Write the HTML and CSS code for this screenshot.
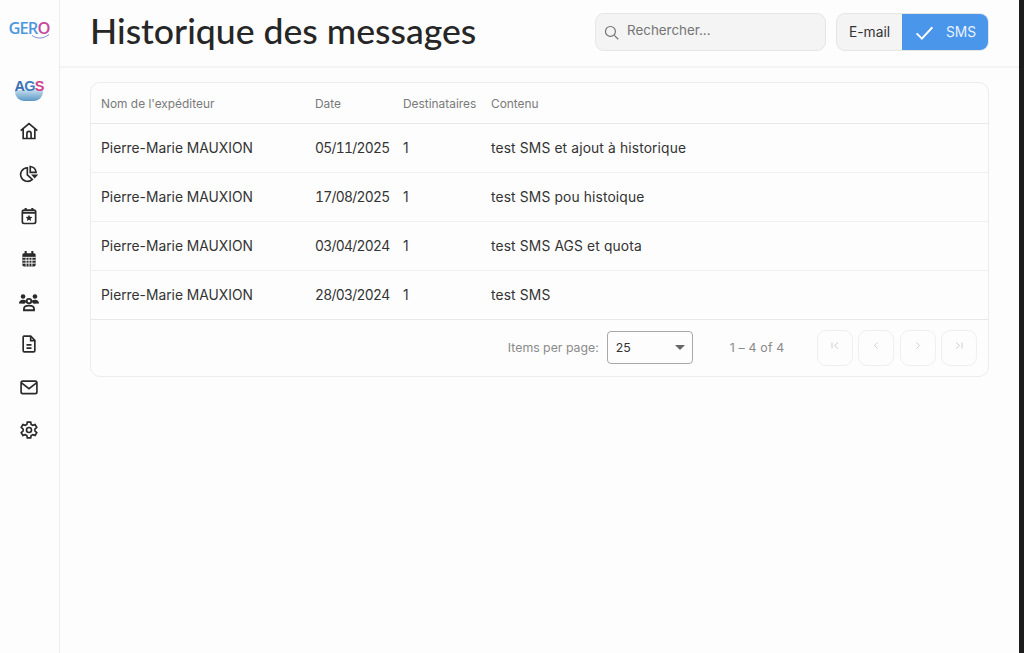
FILE: index.html
```html
<!DOCTYPE html>
<html lang="fr">
<head>
<meta charset="utf-8">
<title>Historique des messages</title>
<link rel="stylesheet" href="styles.css">
</head>
<body>
<div class="app">
  <aside class="sidebar">
    <div class="logo-gero">GER<span class="logo-o">O</span><svg viewBox="0 0 42 6" class="gero-swoosh"><path d="M24 1.500c4 3 11 4 17-1"/></svg></div>
    <div class="logo-ags"><span class="ags-text">A<span class="ags-g">G</span><span class="ags-s">S</span></span><span class="ags-wave"></span></div>
    <nav class="nav">
      <a class="nav-item"><svg viewBox="0 0 24 24" class="ico"><path d="M2 11.500 12 3l10 8.500M5 9.500V21h14V9.500M9.500 21v-6a2.500 2.500 0 0 1 5 0v6"/></svg></a>
      <a class="nav-item"><svg viewBox="0 0 24 24" class="ico"><path d="M10 4.500a8.200 8.200 0 1 0 6 14l-6-5.500z"/><path d="M13.500 3a8 8 0 0 1 7 7h-7z"/><path class="fill" d="M14.500 12.500H23l-4.200 5z"/></svg></a>
      <a class="nav-item"><svg viewBox="0 0 24 24" class="ico"><rect x="4" y="5" width="16" height="16" rx="2"/><path class="thick" d="M4 8h16M8 2.500V6M16 2.500V6"/><path class="fill" d="m12 10.500 1.200 2.500 2.800.3-2 1.900.5 2.800-2.500-1.400-2.500 1.400.5-2.800-2-1.900 2.800-.3z"/></svg></a>
      <a class="nav-item"><svg viewBox="0 0 24 24" class="ico"><rect class="fill" x="4" y="5" width="16" height="16" rx="2"/><path class="fill-line" d="M8 2.500V6M16 2.500V6"/><path class="grid-line" d="M4 10h16M4 13.500h16M4 17h16M8.500 10v11M12 10v11M15.500 10v11"/></svg></a>
      <a class="nav-item"><svg viewBox="0 0 24 24" class="ico ico-wide"><circle class="fill" cx="5.500" cy="6" r="2.500"/><circle class="fill" cx="18.500" cy="6" r="2.500"/><path class="fill" d="M1 13.500c0-2.500 2-4 4.500-4s3.500 1 4 2l-2.500 2.500zM23 13.500c0-2.500-2-4-4.500-4s-3.500 1-4 2l2.500 2.500z"/><circle cx="12" cy="11" r="2.500"/><path d="M6.500 21v-1.500c0-2.500 2.500-3.500 5.500-3.500s5.500 1 5.500 3.500V21z"/></svg></a>
      <a class="nav-item"><svg viewBox="0 0 24 24" class="ico"><path d="M6 2.500h8l5 5V20a1.500 1.500 0 0 1-1.500 1.500h-11A1.500 1.500 0 0 1 5 20V4a1.500 1.500 0 0 1 1-1.500z"/><path d="M9 13h6M9 17h6M14 3v5h5"/></svg></a>
      <a class="nav-item"><svg viewBox="0 0 24 24" class="ico"><rect x="2.500" y="5" width="19" height="15" rx="2"/><path d="m3 7 9 7 9-7"/></svg></a>
      <a class="nav-item"><svg viewBox="0 0 24 24" class="ico"><circle cx="12" cy="12" r="3"/><path d="M10 2.500h4l.6 2.900 1.900 1 2.800-.9 2 3.400-2.200 2v2.200l2.200 2-2 3.400-2.800-.9-1.900 1-.6 2.900h-4l-.6-2.900-1.900-1-2.800.9-2-3.400 2.200-2v-2.200l-2.200-2 2-3.400 2.800.9 1.900-1z"/></svg></a>
    </nav>
  </aside>
  <main class="main">
    <header class="header">
      <h1 class="title">Historique des messages</h1>
      <div class="tools">
        <label class="search">
          <svg viewBox="0 0 24 24" class="search-ico"><circle cx="10.500" cy="10.500" r="7"/><path d="m16 16 5.500 5.500"/></svg>
          <span class="search-text">Rechercher...</span>
        </label>
        <div class="toggle">
          <span class="toggle-opt">E-mail</span>
          <span class="toggle-opt toggle-on"><svg viewBox="0 0 24 24" class="check"><path d="m3 13 6 6L21 6"/></svg>SMS</span>
        </div>
      </div>
    </header>
    <section class="content">
      <div class="card">
        <table class="table">
          <colgroup><col class="c1"><col class="c2"><col class="c3"><col></colgroup>
          <thead>
            <tr><th>Nom de l'expéditeur</th><th>Date</th><th>Destinataires</th><th>Contenu</th></tr>
          </thead>
          <tbody>
            <tr><td>Pierre-Marie MAUXION</td><td class="num">05/11/2025</td><td>1</td><td class="msg">test SMS et ajout à historique</td></tr>
            <tr><td>Pierre-Marie MAUXION</td><td class="num">17/08/2025</td><td>1</td><td class="msg">test SMS pou histoique</td></tr>
            <tr><td>Pierre-Marie MAUXION</td><td class="num">03/04/2024</td><td>1</td><td class="msg">test SMS AGS et quota</td></tr>
            <tr><td>Pierre-Marie MAUXION</td><td class="num">28/03/2024</td><td>1</td><td class="msg">test SMS</td></tr>
          </tbody>
        </table>
        <div class="pager">
          <span class="pager-label">Items per page:</span>
          <div class="select"><span>25</span><span class="caret"></span></div>
          <span class="pager-range">1 – 4 of 4</span>
          <div class="pager-btns">
            <button class="pbtn"><svg viewBox="0 0 12 12"><path d="M3 2.500v6M9 2.500l-3.500 3 3.500 3"/></svg></button>
            <button class="pbtn"><svg viewBox="0 0 12 12"><path d="M7.500 2.500l-3 3 3 3"/></svg></button>
            <button class="pbtn"><svg viewBox="0 0 12 12"><path d="M4.500 2.500l3 3-3 3"/></svg></button>
            <button class="pbtn"><svg viewBox="0 0 12 12"><path d="M3 2.500l3.500 3-3.500 3M9 2.500v6"/></svg></button>
          </div>
        </div>
      </div>
    </section>
  </main>
  <div class="edge"></div>
</div>
</body>
</html>
```
FILE: styles.css
```css
* { box-sizing: border-box; }
html, body { margin: 0; height: 100%; }
body { font-family: Inter, "Liberation Sans", sans-serif; background: #fdfdfd; color: #2b2b2b; overflow: hidden; }
.app { display: flex; height: 653px; width: 1024px; }

.sidebar { width: 60px; flex: none; border-right: 1px solid #ececec; display: flex; flex-direction: column; align-items: center; padding-top: 18px; padding-right: 1px; }
.logo-gero { position: relative; font-family: "Open Sans", sans-serif; font-size: 16.500px; font-weight: 600; line-height: 20px; color: #4f97dd; letter-spacing: -0.900px; }
.logo-o { color: #c64b9c; }
.gero-swoosh { position: absolute; left: 0; bottom: -2px; width: 42px; height: 6px; fill: none; stroke: #7f8fd8; stroke-width: 1; }
.logo-ags { margin-top: 41px; width: 28px; height: 22px; position: relative; }
.ags-wave { position: absolute; left: 0; right: 0; bottom: 0; height: 11px; background: linear-gradient(#c4dcec, #5b98c6); border-radius: 0 0 9px 9px; }
.ags-text { position: absolute; left: -2px; right: -2px; top: 0; z-index: 1; text-align: center; font-family: "Liberation Sans", sans-serif; font-weight: 700; font-size: 14.500px; line-height: 14px; letter-spacing: -0.800px; color: #3a6fb0; white-space: nowrap; }
.ags-g { color: #3d7fc0; }
.ags-s { color: #d1408e; }
.nav { margin-top: 20px; display: flex; flex-direction: column; gap: 22.700px; align-items: center; }
.nav-item { display: flex; width: 20px; height: 20px; align-items: center; justify-content: center; }
.ico { width: 20px; height: 20px; fill: none; stroke: #2a2a2a; stroke-width: 2; flex: none; }
.ico-wide { width: 22px; height: 22px; }
.ico .fill { fill: #2a2a2a; stroke: none; }
.ico .thick { stroke-width: 2.500; }
.ico .fill-line { stroke-width: 2.500; }
.ico .grid-line { stroke: #fdfdfd; stroke-width: 1.100; }

.main { flex: 1; min-width: 0; display: flex; flex-direction: column; }
.header { height: 68px; flex: none; border-bottom: 2px solid #f4f4f4; display: flex; align-items: center; justify-content: space-between; padding: 0 30px 4px 30px; }
.title { margin: 0; font-family: Lato, sans-serif; font-weight: 500; font-size: 35.600px; line-height: 42px; color: #262626; }
.tools { display: flex; gap: 10px; margin-top: 1px; }
.search { width: 231px; height: 38px; background: #f4f4f4; border: 1px solid #e6e6e6; border-radius: 9px; display: flex; align-items: center; padding: 0 7px; gap: 7px; }
.search-ico { width: 17px; height: 17px; fill: none; stroke: #6f6f6f; stroke-width: 1.600; margin-top: 2px; }
.search-text { font-size: 13.400px; color: #747474; margin-top: -3px; }
.toggle { display: flex; width: 153px; height: 38px; background: #f4f4f4; border: 1px solid #e6e6e6; border-radius: 9px; overflow: hidden; font-size: 13.800px; }
.toggle-opt { display: flex; align-items: center; justify-content: center; width: 65px; color: #333; }
.toggle-on { flex: 1; background: #4a96eb; color: #e8f2fd; gap: 11px; }
.check { width: 21px; height: 21px; fill: none; stroke: #fff; stroke-width: 2.200; margin-top: 2px; }

.content { flex: 1; padding: 14px 30px 0 30px; }
.card { border: 1px solid #ececec; border-radius: 10px; overflow: hidden; }
.table { width: 100%; border-collapse: collapse; table-layout: fixed; }
.c1 { width: 214px; }
.c2 { width: 88px; }
.c3 { width: 88px; }
th { height: 40px; padding: 2px 0 0 10px; text-align: left; font-size: 11.900px; font-weight: 400; color: #7a7a7a; border-bottom: 1px solid #e8e8e8; white-space: nowrap; }
td { height: 49px; padding: 0 0 0 10px; font-size: 13.800px; color: #333; border-bottom: 1px solid #f0f0f0; white-space: nowrap; }
td.num { font-variant-numeric: tabular-nums; letter-spacing: -0.700px; }
td.msg { letter-spacing: 0.140px; }
tbody tr:last-child td { border-bottom: 1px solid #e8e8e8; }
.pager { height: 56px; display: flex; align-items: center; justify-content: flex-end; padding: 0 11px 0 0; font-size: 12.300px; color: #8a8a8a; }
.pager-label { margin-right: 8px; }
.select { width: 86px; height: 33px; border: 1px solid #a8a8a8; border-radius: 4px; display: flex; align-items: center; justify-content: space-between; padding: 0 7px 0 8px; color: #333; }
.caret { width: 0; height: 0; border-left: 5px solid transparent; border-right: 5px solid transparent; border-top: 5px solid #666; }
.pager-range { margin: 0 32px 0 37px; letter-spacing: 0.200px; }
.pager-btns { display: flex; gap: 5.500px; }
.pbtn { width: 36px; height: 36px; padding: 0; background: transparent; border: 1px solid #efefef; border-radius: 9px; display: flex; align-items: center; justify-content: center; }
.pbtn svg { width: 12px; height: 12px; fill: none; stroke: #cfcfcf; stroke-width: 1; margin-top: -4px; }

.edge { width: 5px; flex: none; background: #1c1c1c; }
```
